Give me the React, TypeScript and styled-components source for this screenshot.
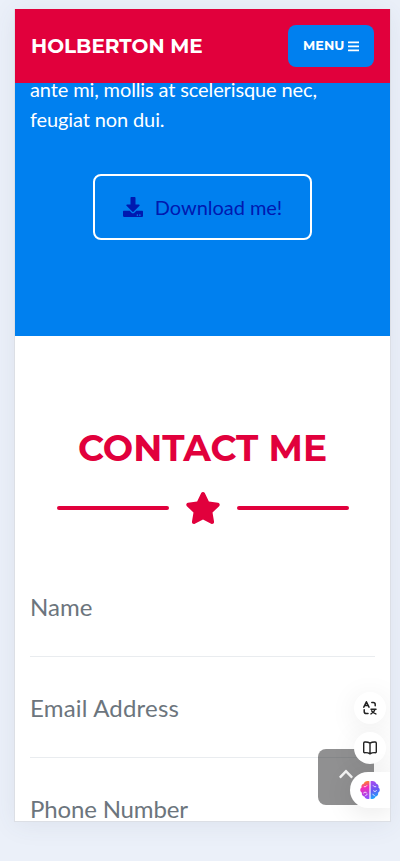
import React from 'react';
import styled, { createGlobalStyle } from 'styled-components';
import { FaBars, FaChevronUp, FaDownload, FaStar } from 'react-icons/fa';

const GlobalStyle = createGlobalStyle`
  * { box-sizing: border-box; }
  html, body { margin: 0; height: 861px; overflow: hidden; background: #ebf0f9; }
  body { font-family: Lato, sans-serif; }
`;

const Page = styled.div`
  height: 861px;
  padding: 9px 9px 39px 14px;
  background: #ebf0f9;
`;

const Frame = styled.main`
  position: relative;
  display: flex;
  flex-direction: column;
  height: 813px;
  border: 1px solid #dcdfe5;
  border-top: 0;
  background: #fff;
  overflow: hidden;
`;

const Shadow = styled.div`
  height: 813px;
  box-shadow: 0 3px 24px rgba(60, 75, 100, 0.08);
`;

const Header = styled.header`
  position: relative;
  z-index: 1;
  display: flex;
  flex: none;
  align-items: center;
  justify-content: space-between;
  height: 74px;
  padding: 0 16px;
  background: #e1003c;
  color: #fff;
  font-family: Montserrat, Inter, sans-serif;
  font-weight: 700;
`;

const Brand = styled.span`
  font-size: 20px;
  line-height: 30px;
  white-space: nowrap;
`;

const MenuButton = styled.button`
  display: flex;
  align-items: center;
  justify-content: center;
  gap: 3.4px;
  width: 86px;
  height: 42px;
  padding: 0;
  border: 0;
  border-radius: 8px;
  background: #0080ef;
  color: #fff;
  font: 700 12.8px/20px Montserrat, Inter, sans-serif;

  svg {
    width: 11.2px;
    height: 12.8px;
  }
`;

const About = styled.section`
  display: flex;
  flex: none;
  flex-direction: column;
  align-items: center;
  height: 253px;
  background: #0080ef;
`;

const Lead = styled.p`
  align-self: stretch;
  margin: -9px 0 40px;
  padding: 0 15px;
  color: #fff;
  font-size: 20px;
  line-height: 30px;
  letter-spacing: -0.12px;
`;

const Download = styled.a`
  display: flex;
  align-items: center;
  justify-content: center;
  gap: 12px;
  width: 219px;
  height: 66px;
  border: 2px solid #fff;
  border-radius: 8px;
  color: #0019b0;
  font-size: 20px;
  line-height: 30px;
  letter-spacing: -0.04px;
`;

const Contact = styled.section`
  display: flex;
  flex: none;
  flex-direction: column;
  align-items: center;
  padding: 88px 15px 0;
`;

const Title = styled.h2`
  margin: 0;
  color: #e1003c;
  font: 700 36px/48px Montserrat, Inter, sans-serif;
  white-space: nowrap;
`;

const Divider = styled.div`
  display: flex;
  align-items: center;
  justify-content: center;
  gap: 16px;
  height: 36px;
  margin: 18px 0 30px;
  color: #e1003c;
`;

const Line = styled.span`
  width: 112px;
  height: 4px;
  border-radius: 3px;
  background: #e1003c;
`;

const Field = styled.label<{ $tracking?: number }>`
  display: block;
  align-self: stretch;
  height: 101px;
  padding-top: 33px;
  border-bottom: 1px solid #e9ecef;
  color: #6c757d;
  font-size: 24px;
  line-height: 36px;
  letter-spacing: ${(p) => p.$tracking ?? 0}px;
`;

const ScrollTop = styled.button`
  position: absolute;
  right: 16px;
  bottom: 16px;
  display: flex;
  align-items: center;
  justify-content: center;
  width: 56px;
  height: 56px;
  padding: 0 0 6px;
  border: 0;
  border-radius: 8px;
  background: rgba(42, 43, 45, 0.52);
  color: #f4f4f4;
`;

const FloatingTool = styled.button<{ $top: number }>`
  position: absolute;
  top: ${(p) => p.$top}px;
  right: 4px;
  display: flex;
  align-items: center;
  justify-content: center;
  width: 32px;
  height: 32px;
  padding: 0;
  border: 0;
  border-radius: 50%;
  background: #fff;
  color: #222;
  box-shadow: 0 4px 28px rgba(0, 0, 0, 0.08);
`;

const Assistant = styled.button`
  position: absolute;
  top: 763px;
  right: 0;
  display: flex;
  align-items: center;
  width: 40px;
  height: 36px;
  padding: 0 0 0 10px;
  border: 0;
  border-radius: 18px 0 0 18px;
  background: #fff;
  box-shadow: 0 4px 28px rgba(0, 0, 0, 0.1);
`;

const TranslateIcon = () => (
  <svg width="16" height="16" viewBox="0 0 16 16" fill="none" stroke="currentColor" strokeWidth="1.5" strokeLinecap="round" strokeLinejoin="round">
    <path d="M1.8 7.2 4.4 1.8 7 7.2M2.8 5.5h3.2" />
    <path d="M9.8 2.4h1.4q2 0 2 2v1.4M2.2 9.8v1.6q0 2.2 2.2 2.2H6" />
    <path d="M9 9.2h5M9 13.9q3.2-1.5 4-4.5M9.7 10.8q1.3 2.2 4.1 3.1" />
  </svg>
);

const BookIcon = () => (
  <svg width="16" height="16" viewBox="0 0 16 16" fill="none" stroke="currentColor" strokeWidth="1.4" strokeLinejoin="round">
    <path d="M8 3.2Q5.7 1.7 2.8 2q-1.1.1-1.1 1.2v8.6q0 1 1.1.9 3-.3 5.2 1.1 2.2-1.4 5.2-1.1 1.1.1 1.1-.9V3.2q0-1.1-1.1-1.2Q10.3 1.7 8 3.2v10.6" />
  </svg>
);

const BrainIcon = () => (
  <svg width="20" height="20" viewBox="0 0 20 20">
    <defs>
      <linearGradient id="brainLeft" x1="3" y1="2" x2="8" y2="18" gradientUnits="userSpaceOnUse">
        <stop stopColor="#ff8a1f" />
        <stop offset="0.35" stopColor="#f32bb7" />
        <stop offset="1" stopColor="#9150ff" />
      </linearGradient>
      <linearGradient id="brainRight" x1="12" y1="2" x2="18" y2="18" gradientUnits="userSpaceOnUse">
        <stop stopColor="#a34cf0" />
        <stop offset="0.5" stopColor="#6658f3" />
        <stop offset="1" stopColor="#13b5ff" />
      </linearGradient>
    </defs>
    <path fill="url(#brainLeft)" d="M9.4 1.2v17.6C7 19.7 4.8 18.6 4.5 16.6 2.4 16.2 1.4 14.5 2 12.8-.2 11.6-.3 8.7 1.6 7.5 1 5.7 2 4.2 3.7 3.8 4.1 1.6 6.6.4 9.4 1.2Z" />
    <path fill="url(#brainRight)" d="M10.6 1.2v17.6c2.4.9 4.6-.2 4.9-2.2 2.1-.4 3.1-2.1 2.5-3.8 2.2-1.2 2.3-4.1.4-5.3.6-1.8-.4-3.3-2.1-3.7-.4-2.2-2.9-3.4-5.7-2.6Z" />
    <path fill="none" stroke="#fff" strokeOpacity="0.8" strokeWidth="1" strokeLinecap="round" d="M4.2 6.8q2 .5 2.7-1.2M3.5 12.9q1.5-2 3-.2M5.7 15.4l1.5-1M15.8 6.8q-2 .5-2.7-1.2M16.5 10.7q-1.5 2-3 .2M14.3 15.4l-1.5-1" />
  </svg>
);

export default function App() {
  return (
    <Page>
      <GlobalStyle />
      <Shadow>
        <Frame>
          <Header>
            <Brand>HOLBERTON ME</Brand>
            <MenuButton>MENU <FaBars /></MenuButton>
          </Header>
          <About>
            <Lead>ante mi, mollis at scelerisque nec,<br />feugiat non dui.</Lead>
            <Download><FaDownload size={20} />Download me!</Download>
          </About>
          <Contact>
            <Title>CONTACT ME</Title>
            <Divider><Line /><FaStar size={36} /><Line /></Divider>
            <Field>Name</Field>
            <Field $tracking={0.2}>Email Address</Field>
            <Field $tracking={-0.15}>Phone Number</Field>
          </Contact>
          <ScrollTop aria-label="Back to top"><FaChevronUp size={16} /></ScrollTop>
          <FloatingTool $top={683} aria-label="Translate"><TranslateIcon /></FloatingTool>
          <FloatingTool $top={723} aria-label="Reader"><BookIcon /></FloatingTool>
          <Assistant aria-label="Assistant"><BrainIcon /></Assistant>
        </Frame>
      </Shadow>
    </Page>
  );
}
